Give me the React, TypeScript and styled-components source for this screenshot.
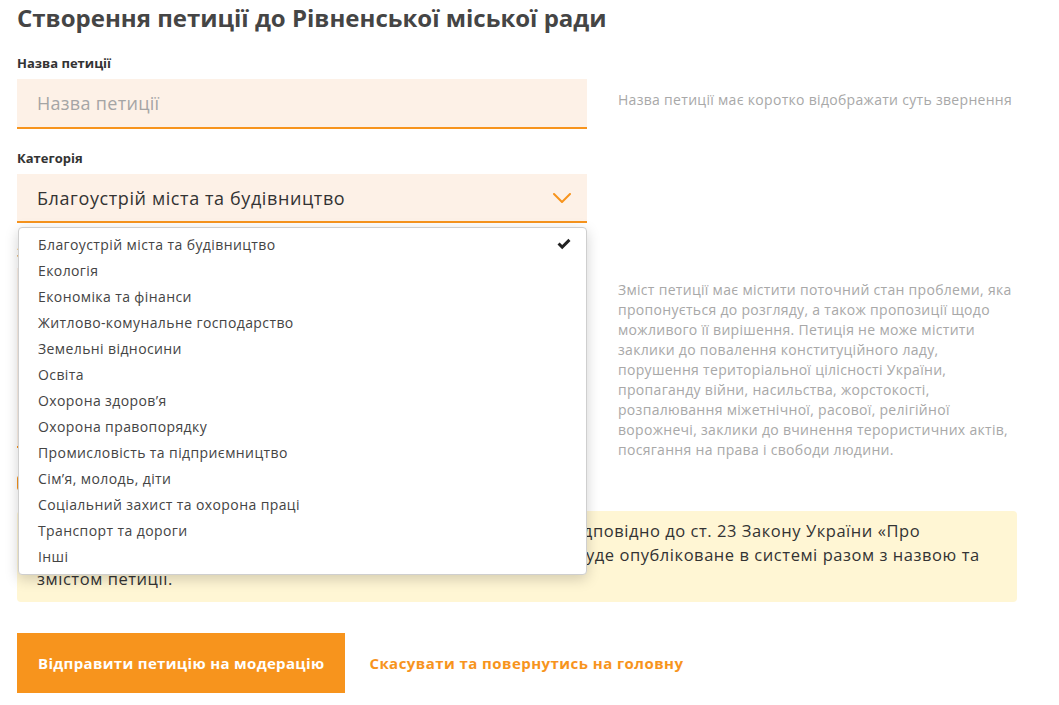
import React from 'react';
import styled, { createGlobalStyle } from 'styled-components';

const GlobalStyle = createGlobalStyle`
  html, body {
    margin: 0;
    padding: 0;
    background: #fff;
    font-family: "Open Sans", "Liberation Sans", sans-serif;
  }
`;

const Page = styled.div`
  width: 1000px;
  padding: 0 17px;
`;

const Title = styled.h1`
  margin: 0;
  padding-top: 3px;
  font-size: 24px;
  line-height: 30px;
  font-weight: 700;
  color: #454545;
`;

const Row = styled.div<{ $top: number }>`
  display: grid;
  grid-template-columns: 570px 1fr;
  column-gap: 31px;
  margin-top: ${(p) => p.$top}px;
`;

const Field = styled.div`
  position: relative;
  display: flex;
  flex-direction: column;
`;

const Label = styled.label`
  font-size: 13px;
  line-height: 16px;
  font-weight: 700;
  color: #333;
  margin-bottom: 8px;
`;

const Input = styled.input`
  height: 50px;
  box-sizing: border-box;
  border: none;
  border-bottom: 2px solid #f7941d;
  background: #fdf1e7;
  padding: 0 20px;
  font-family: inherit;
  font-size: 18px;
  letter-spacing: 0.3px;
  color: #333;
  outline: none;
  &::placeholder {
    color: #a5a5a5;
  }
`;

const SelectBox = styled.div`
  height: 49px;
  box-sizing: border-box;
  border-bottom: 2px solid #f7941d;
  background: #fdf1e7;
  padding: 0 16px 0 20px;
  display: flex;
  align-items: center;
  justify-content: space-between;
  font-size: 18px;
  letter-spacing: 0.6px;
  color: #333;
`;

const TextArea = styled.div`
  height: 180px;
  box-sizing: border-box;
  border-bottom: 2px solid #f7941d;
  background: #fdf1e7;
`;

const Hint = styled.p<{ $pad: number }>`
  margin: 0;
  padding-top: ${(p) => p.$pad}px;
  font-size: 14px;
  letter-spacing: 0.3px;
  line-height: 20px;
  color: #a8a8a8;
`;

const Menu = styled.ul`
  position: absolute;
  top: calc(100% + 4px);
  left: 1px;
  right: 0;
  margin: 0;
  padding: 3px 0 5px;
  list-style: none;
  background: #fff;
  border: 1px solid #cfcfcf;
  border-radius: 4px;
  box-shadow: 0 4px 14px rgba(0, 0, 0, 0.18);
  z-index: 5;
`;

const Option = styled.li`
  height: 26px;
  display: flex;
  align-items: center;
  justify-content: space-between;
  padding: 0 15px 0 19px;
  font-size: 14px;
  letter-spacing: 0.4px;
  color: #444;
`;

const CheckBox = styled.span`
  display: block;
  width: 14px;
  height: 14px;
  box-sizing: border-box;
  border: 2px solid #f7941d;
  border-radius: 2px;
`;

const Notice = styled.div`
  margin-top: 21px;
  background: #fff6d4;
  border-radius: 4px;
  padding: 8px 20px 11px;
  font-size: 16.5px;
  letter-spacing: 0.55px;
  line-height: 24px;
  color: #333;
  white-space: nowrap;
`;

const Actions = styled.div`
  display: flex;
  align-items: center;
  gap: 24px;
  margin-top: 31px;
`;

const SubmitButton = styled.button`
  height: 60px;
  padding: 0 21px;
  border: none;
  background: #f7941d;
  color: #fff;
  font-family: inherit;
  font-size: 15px;
  letter-spacing: 0.33px;
  font-weight: 700;
  cursor: pointer;
`;

const CancelLink = styled.a`
  color: #f7941d;
  font-size: 15px;
  letter-spacing: 0.45px;
  font-weight: 700;
  text-decoration: none;
`;

const categories = [
  'Благоустрій міста та будівництво',
  'Екологія',
  'Економіка та фінанси',
  'Житлово-комунальне господарство',
  'Земельні відносини',
  'Освіта',
  'Охорона здоров’я',
  'Охорона правопорядку',
  'Промисловість та підприємництво',
  'Сім’я, молодь, діти',
  'Соціальний захист та охорона праці',
  'Транспорт та дороги',
  'Інші',
];

const Chevron = () => (
  <svg width="18" height="10" viewBox="0 0 18 10" fill="none">
    <path d="M1 1l8 8 8-8" stroke="#f7941d" strokeWidth="2" strokeLinecap="round" strokeLinejoin="round" />
  </svg>
);

const Tick = () => (
  <svg width="14" height="12" viewBox="0 0 14 12">
    <path d="M0.5 6.5L2.6 4.4L5.2 7L11.4 0.8L13.5 2.9L5.2 11.2Z" fill="#222" />
  </svg>
);

const App: React.FC = () => {
  return (
    <Page>
      <GlobalStyle />
      <Title>Створення петиції до Рівненської міської ради</Title>

      <Row $top={22}>
        <Field>
          <Label>Назва петиції</Label>
          <Input placeholder="Назва петиції" />
        </Field>
        <Hint $pad={35}>Назва петиції має коротко відображати суть звернення</Hint>
      </Row>

      <Row $top={21}>
        <Field>
          <Label>Категорія</Label>
          <SelectBox>
            <span>Благоустрій міста та будівництво</span>
            <Chevron />
          </SelectBox>
          <Menu>
            {categories.map((c, i) => (
              <Option key={c}>
                <span>{c}</span>
                {i === 0 && <Tick />}
              </Option>
            ))}
          </Menu>
        </Field>
      </Row>

      <Row $top={21}>
        <Field>
          <Label>Зміст петиції</Label>
          <TextArea />
        </Field>
        <Hint $pad={36}>
          Зміст петиції має містити поточний стан проблеми, яка пропонується до розгляду, а також
          пропозиції щодо можливого її вирішення. Петиція не може містити заклики до повалення
          конституційного ладу, порушення територіальної цілісності України, пропаганду війни,
          насильства, жорстокості, розпалювання міжетнічної, расової, релігійної ворожнечі, заклики
          до вчинення терористичних актів, посягання на права і свободи людини.
        </Hint>
      </Row>

      <Row $top={16}>
        <Field>
          <CheckBox />
        </Field>
      </Row>

      <Notice>
        Натискаючи цю кнопку, ви погоджуєтесь з тим, що ваше ім’я, відповідно до ст. 23 Закону України «Про
        <br />
        звернення громадян», а також дата подання та номер петиції, буде опубліковане в системі разом з назвою та
        <br />
        змістом петиції.
      </Notice>

      <Actions>
        <SubmitButton>Відправити петицію на модерацію</SubmitButton>
        <CancelLink href="#">Скасувати та повернутись на головну</CancelLink>
      </Actions>
    </Page>
  );
};

export default App;
